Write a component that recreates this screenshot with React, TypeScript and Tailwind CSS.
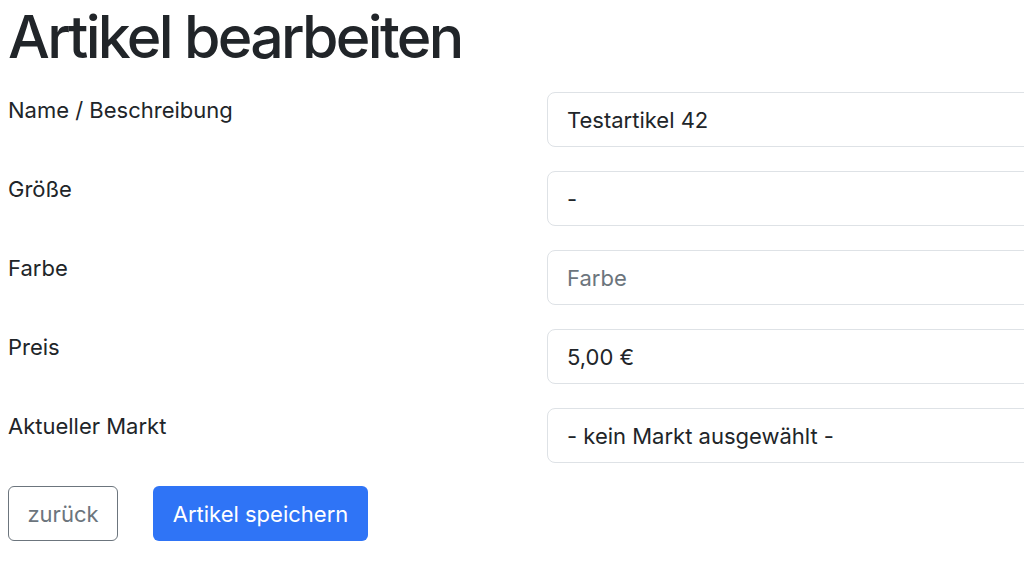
import React from "react";

const rows: { label: string; value: string; placeholder?: boolean }[] = [
  { label: "Name / Beschreibung", value: "Testartikel 42" },
  { label: "Größe", value: "-" },
  { label: "Farbe", value: "Farbe", placeholder: true },
  { label: "Preis", value: "5,00 €" },
  { label: "Aktueller Markt", value: "- kein Markt ausgewählt -" },
];

export default function App() {
  return (
    <div
      className="w-[1024px] h-[581px] overflow-hidden bg-white text-[#212529]"
      style={{ fontFamily: "Inter, 'Noto Sans', sans-serif" }}
    >
      <div className="pl-[8px] w-[1300px]">
        <h1 className="text-[59px] leading-[1.2] font-medium tracking-[-2.7px] pt-[2px] mb-[19px]">
          Artikel bearbeiten
        </h1>
        <div className="flex flex-col gap-[24px]">
          {rows.map((r) => (
            <div key={r.label} className="flex items-start">
              <label className="w-[539px] text-[22px] leading-[33px] pt-[2px]">{r.label}</label>
              <div className="w-[700px] h-[55px] border border-[#dee2e6] rounded-[8px] flex items-center pl-[19px] pt-[2px] text-[22px]">
                <span className={r.placeholder ? "text-[#6c757d]" : "text-[#212529]"}>{r.value}</span>
              </div>
            </div>
          ))}
        </div>
        <div className="flex gap-[35px] mt-[23px]">
          <button className="h-[55px] w-[110px] border border-[#6c757d] rounded-[6px] text-[#6c757d] text-[22px] pt-[2px]">
            zurück
          </button>
          <button className="h-[55px] w-[215px] bg-[#2f74f6] rounded-[6px] text-white text-[22px] pt-[2px]">
            Artikel speichern
          </button>
        </div>
      </div>
    </div>
  );
}
